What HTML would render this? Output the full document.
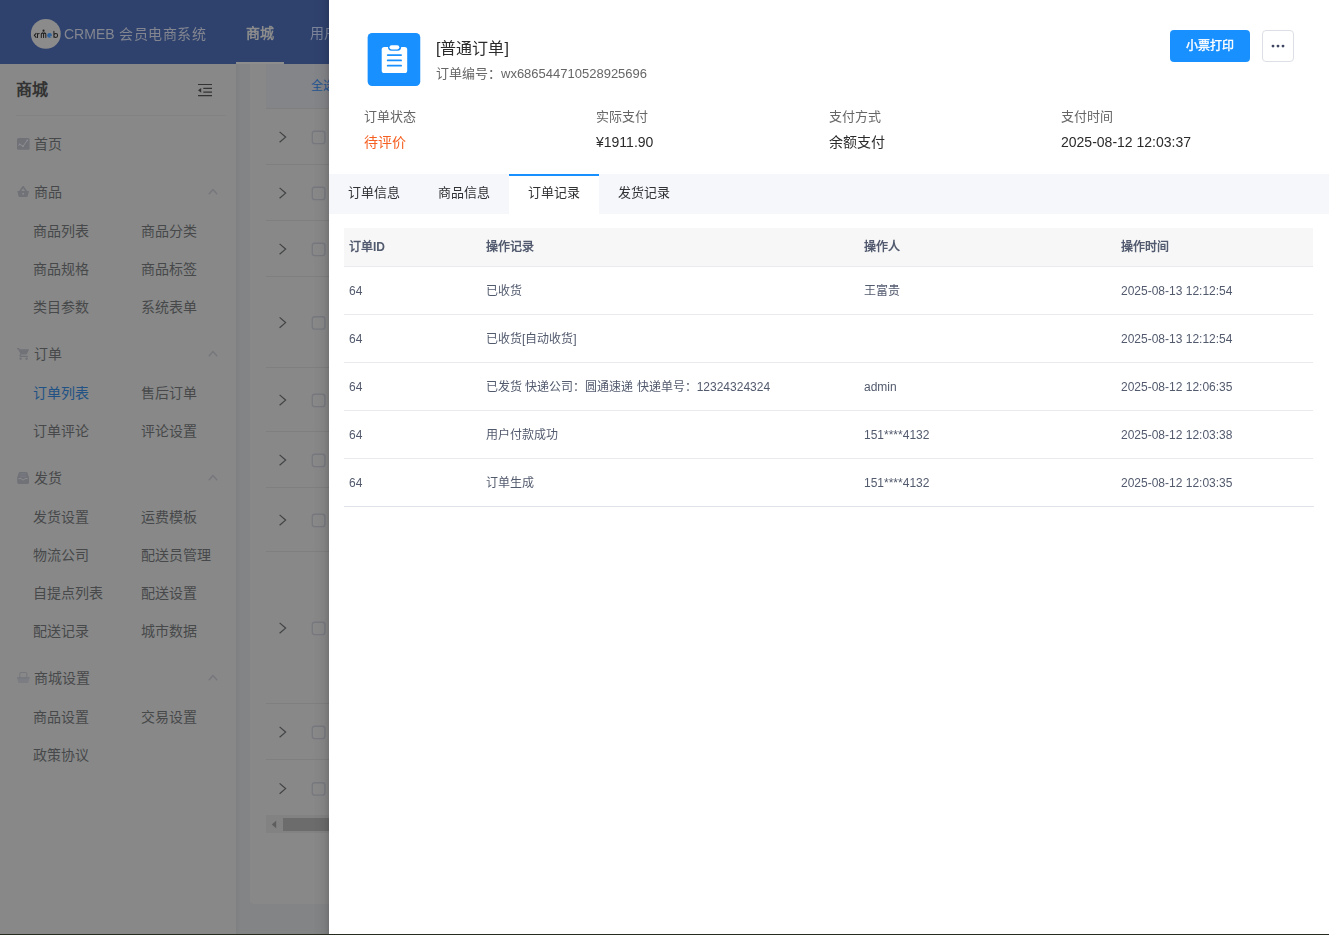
<!DOCTYPE html>
<html lang="zh-CN">
<head>
<meta charset="utf-8">
<title>CRMEB</title>
<style>
*{box-sizing:border-box;margin:0;padding:0}
html,body{width:1329px;height:935px;overflow:hidden}
body{font-family:"Liberation Sans",sans-serif;background:#838486;position:relative;color:#333}
.abs{position:absolute}
/* ---------- dimmed background app ---------- */
#hdr{left:0;top:0;width:1329px;height:64px;background:#2f426e;will-change:transform;transform:translateZ(0)}
#logo{left:31px;top:19px;width:30px;height:30px;border-radius:50%;background:#8e8e8e;overflow:hidden}
#brand{left:64px;top:24px;font-size:14px;line-height:20px;color:#838690;white-space:nowrap}
#brand span{letter-spacing:.5px;margin-left:.6px}
.nav{top:23px;font-size:14px;line-height:20px;color:#7d859b;white-space:nowrap}
#navline{left:236px;top:62px;width:48px;height:2px;background:#8d8d8d}
#side{left:0;top:64px;width:236px;height:871px;background:#888888}
#side .ttl{left:16px;top:15px;font-size:16px;line-height:22px;font-weight:bold;color:#333}
#side .hr{left:16px;top:51px;width:210px;height:1px;background:#828282}
.mi{font-size:14px;line-height:20px;color:#47484a;white-space:nowrap}
.mi.act{color:#215285}
#card{left:250px;top:64px;width:1079px;height:840px;background:#888888;border-radius:0 0 0 4px}
#thead{left:266px;top:64px;width:1063px;height:44px;background:#848589}
.rl{left:266px;width:1063px;height:1px;background:#7f7f80}
.cb{left:311px;width:14px;height:14px;border:1px solid #7b7c80;border-radius:2px;background:#8a8a8a}
.rc{left:278px;width:8px;height:12px}
#botline{left:0;top:934px;width:1329px;height:1px;background:#252d22;z-index:9}
/* ---------- drawer ---------- */
#shadow{left:313px;top:0;width:16px;height:935px;background:linear-gradient(to right,rgba(0,0,0,0) 0,rgba(0,0,0,.015) 35%,rgba(0,0,0,.045) 65%,rgba(0,0,0,.09) 85%,rgba(0,0,0,.15) 100%)}
#drawer{left:329px;top:0;width:1000px;height:935px;background:#fff;will-change:transform;transform:translateZ(0)}
#ibox{left:39px;top:33px;width:53px;height:53px;border-radius:4px;background:#1890ff}
#t1{left:107px;top:38px;font-size:16px;line-height:22px;color:#2b2b2b;white-space:nowrap}
#t2{left:107px;top:65px;font-size:13px;line-height:18px;color:#666;white-space:nowrap}
#btn1{left:841px;top:30px;width:80px;height:32px;border-radius:4px;background:#1890ff;color:#fff;font-size:12px;line-height:32px;text-align:center;-webkit-text-stroke:.4px #fff}
#btn2{left:933px;top:30px;width:32px;height:32px;border-radius:4px;border:1px solid #dcdfe6;background:#fff}
#btn2 i{position:absolute;top:13.7px;width:2.6px;height:2.6px;border-radius:50%;background:#4a5068}
.lab{top:108px;font-size:13px;line-height:18px;color:#666;white-space:nowrap}
.val{top:132px;font-size:14px;line-height:20px;color:#2b2b2b;white-space:nowrap}
#tabs{left:0;top:174px;width:1000px;height:40px;background:#f5f7fa}
.tab{top:0;width:90px;height:40px;font-size:13px;line-height:38px;text-align:center;color:#303133}
.tab.on{background:#fff;border-top:2px solid #1890ff;line-height:34px}
#tbl{left:15px;top:228px;width:969px}
#th{left:0;top:0;width:969px;height:38px;background:#f7f7f7}
.hc{top:10px;font-size:12px;line-height:18px;font-weight:bold;color:#515a6e;white-space:nowrap}
.row{left:0;width:969px;height:48px;border-top:1px solid #e8eaee}
#lastl{left:0;top:278px;width:970px;height:1px;background:#dfe2e8}
.c{top:15px;font-size:12px;line-height:18px;color:#525a6d;white-space:nowrap}
.c1{left:5px}.c2{left:142px}.c3{left:520px}.c4{left:777px}
</style>
</head>
<body>
<!-- background application (dimmed by modal mask) -->
<div id="hdr" class="abs">
  <svg class="abs" style="left:26px;top:14px;width:40px;height:40px" viewBox="26 14 40 40"><circle cx="45.8" cy="33.9" r="14.9" fill="#8b8b8b"/><g fill="none" stroke="#222" stroke-width="1.05" stroke-linecap="round" stroke-linejoin="round"><path d="M36.1 33.3 L34.3 35.4 L36.1 37.4"/><path d="M37.5 37.5 V33.5 M37.5 34.7 Q37.9 33.5 39.1 33.4"/><path d="M41.3 37.5 V34.1 Q41.3 33.1 42.4 33.1 Q43.55 33.1 43.55 34.1 V37.5 M43.55 34.1 Q43.55 33.1 44.7 33.1 Q45.8 33.1 45.8 34.1 V37.5"/><path d="M53.9 31.3 V37.3 M53.9 35.5 A1.85 1.95 0 1 1 57.6 35.5 A1.85 1.95 0 1 1 53.9 35.5"/></g><circle cx="43.55" cy="30.6" r="1.05" fill="#222"/><path d="M42.3 32.3 Q43.55 31.3 44.8 32.3" stroke="#222" stroke-width=".7" fill="none"/><circle cx="49.55" cy="35.4" r="2.35" fill="#2b619e"/><path d="M49.8 36.1 L52 36.6" stroke="#8b8b8b" stroke-width=".7"/></svg>
  <div id="brand" class="abs">CRMEB <span>会员电商系统</span></div>
  <div class="abs nav" style="left:246px;font-weight:bold;color:#8c8c8c">商城</div>
  <div class="abs nav" style="left:310px">用户</div>
  <div id="navline" class="abs"></div>
</div>
<div id="side" class="abs">
  <div class="abs ttl">商城</div>
  <div class="abs hr"></div>
  <svg class="abs" style="left:17px;top:74px;width:13px;height:12px" viewBox="0 0 13 12"><rect x="0" y="0" width="12.6" height="11.8" rx="1.6" fill="#707278"/><path d="M1.6 7.6 L2.6 6.2 L6 8.3 L10.4 2.2" stroke="#8c8d92" stroke-width="1" fill="none"/><circle cx="2.6" cy="6.3" r=".9" fill="#8c8d92"/><circle cx="6" cy="8.2" r=".9" fill="#8c8d92"/><circle cx="10.3" cy="2.3" r=".9" fill="#8c8d92"/></svg>
  <div class="abs mi" style="left:34px;top:70px">首页</div>
  <svg class="abs" style="left:17px;top:122px;width:13px;height:12px" viewBox="0 0 13 12"><path d="M0.3 5.1 H12 L10.7 10.2 Q10.5 11 9.6 11 H2.7 Q1.8 11 1.6 10.2 Z" fill="#707278"/><path d="M2.9 5.6 L6.15 0.8 L9.4 5.6" stroke="#707278" stroke-width="1.7" fill="none" stroke-linejoin="round"/><rect x="5.35" y="6.9" width="1.6" height="1.7" fill="#8a8b8e"/></svg>
  <div class="abs mi" style="left:34px;top:118px">商品</div>
  <svg class="abs" style="left:208px;top:124px;width:10px;height:7px" viewBox="0 0 10 7"><path d="M0.8 6.2 L5 1.6 L9.2 6.2" stroke="#75777c" stroke-width="1.35" fill="none"/></svg>
  <div class="abs mi" style="left:33px;top:157px">商品列表</div>
  <div class="abs mi" style="left:141px;top:157px">商品分类</div>
  <div class="abs mi" style="left:33px;top:195px">商品规格</div>
  <div class="abs mi" style="left:141px;top:195px">商品标签</div>
  <div class="abs mi" style="left:33px;top:233px">类目参数</div>
  <div class="abs mi" style="left:141px;top:233px">系统表单</div>
  <svg class="abs" style="left:17px;top:284px;width:12.6px;height:12px" viewBox="1 2 21 20"><path fill="#707278" d="M7 18c-1.1 0-1.99.9-1.99 2S5.9 22 7 22s2-.9 2-2-.9-2-2-2zM1 2v2h2l3.6 7.59-1.35 2.45c-.16.28-.25.61-.25.96 0 1.1.9 2 2 2h12v-2H7.42c-.14 0-.25-.11-.25-.25l.03-.12.9-1.63h7.45c.75 0 1.41-.41 1.75-1.03l3.58-6.49c.08-.14.12-.31.12-.47 0-.55-.45-1-1-1H5.21l-.94-2H1zm16 16c-1.1 0-1.99.9-1.99 2s.89 2 1.99 2 2-.9 2-2-.9-2-2-2z"/></svg>
  <div class="abs mi" style="left:34px;top:280px">订单</div>
  <svg class="abs" style="left:208px;top:286px;width:10px;height:7px" viewBox="0 0 10 7"><path d="M0.8 6.2 L5 1.6 L9.2 6.2" stroke="#75777c" stroke-width="1.35" fill="none"/></svg>
  <div class="abs mi act" style="left:33px;top:319px">订单列表</div>
  <div class="abs mi" style="left:141px;top:319px">售后订单</div>
  <div class="abs mi" style="left:33px;top:357px">订单评论</div>
  <div class="abs mi" style="left:141px;top:357px">评论设置</div>
  <svg class="abs" style="left:17px;top:408px;width:13px;height:12px" viewBox="0 0 13 12"><path d="M2.9 0 H9.3 Q10.1 0 10.4 .8 L12 5.5 V10.6 Q12 12 10.6 12 H1.6 Q0.2 12 0.2 10.6 V5.5 L1.8 .8 Q2.1 0 2.9 0 Z" fill="#707278"/><path d="M1.6 6.6 H4.4 Q4.6 7.9 6.1 7.9 Q7.6 7.9 7.8 6.6 H10.6" stroke="#8d8e92" stroke-width=".9" fill="none"/><path d="M3.3 1.9 H8.9 M2.8 4.2 H9.4" stroke="#818389" stroke-width=".7"/></svg>
  <div class="abs mi" style="left:34px;top:404px">发货</div>
  <svg class="abs" style="left:208px;top:410px;width:10px;height:7px" viewBox="0 0 10 7"><path d="M0.8 6.2 L5 1.6 L9.2 6.2" stroke="#75777c" stroke-width="1.35" fill="none"/></svg>
  <div class="abs mi" style="left:33px;top:443px">发货设置</div>
  <div class="abs mi" style="left:141px;top:443px">运费模板</div>
  <div class="abs mi" style="left:33px;top:481px">物流公司</div>
  <div class="abs mi" style="left:141px;top:481px">配送员管理</div>
  <div class="abs mi" style="left:33px;top:519px">自提点列表</div>
  <div class="abs mi" style="left:141px;top:519px">配送设置</div>
  <div class="abs mi" style="left:33px;top:557px">配送记录</div>
  <div class="abs mi" style="left:141px;top:557px">城市数据</div>
  <svg class="abs" style="left:17px;top:608px;width:13px;height:12px" viewBox="0 0 13 12"><path d="M2.8 5.4 V1.4 Q2.8 .5 3.7 .5 H8.9 Q9.8 .5 9.8 1.4 V5.4" stroke="#72747a" stroke-width=".8" fill="none"/><path d="M0.1 5.4 H12.6 L11.3 10.6 Q11.2 11.1 10.6 11.1 H2.1 Q1.5 11.1 1.4 10.6 Z" fill="#7b7d83"/><path d="M0.1 5.8 H12.6" stroke="#72747a" stroke-width=".9"/></svg>
  <div class="abs mi" style="left:34px;top:604px">商城设置</div>
  <svg class="abs" style="left:208px;top:610px;width:10px;height:7px" viewBox="0 0 10 7"><path d="M0.8 6.2 L5 1.6 L9.2 6.2" stroke="#75777c" stroke-width="1.35" fill="none"/></svg>
  <div class="abs mi" style="left:33px;top:643px">商品设置</div>
  <div class="abs mi" style="left:141px;top:643px">交易设置</div>
  <div class="abs mi" style="left:33px;top:681px">政策协议</div>
  <svg class="abs" style="left:197px;top:19px;width:16px;height:14px" viewBox="0 0 16 14"><path d="M1 1.5 H15 M6.3 5.4 H15 M6.3 9.1 H15 M1 12.6 H15" stroke="#333" stroke-width="1.1" fill="none"/><path d="M4.2 5 V9.7 L1 7.35 Z" fill="#333"/></svg>
</div>
<div class="abs" style="left:236px;top:64px;width:5px;height:871px;background:linear-gradient(to right,rgba(0,0,0,.035),rgba(0,0,0,0))"></div>
<div id="card" class="abs"></div>
<div id="thead" class="abs"></div>
<div class="abs" style="left:311px;top:77px;font-size:12px;line-height:18px;color:#1f5492;white-space:nowrap">全选</div>
<div class="abs rl" style="top:108px"></div>
<div class="abs rl" style="top:164px"></div>
<div class="abs rl" style="top:220px"></div>
<div class="abs rl" style="top:276px"></div>
<div class="abs rl" style="top:367px"></div>
<div class="abs rl" style="top:431px"></div>
<div class="abs rl" style="top:487px"></div>
<div class="abs rl" style="top:551px"></div>
<div class="abs rl" style="top:703px"></div>
<div class="abs rl" style="top:759px"></div>
<svg class="abs" style="left:266px;top:64px;width:63px;height:871px" viewBox="266 64 63 871"><path d="M279.6 131.90 L285.6 137.10 L279.6 142.30" stroke="#424345" stroke-width="1.25" fill="none"/><rect x="312.3" y="131.25" width="12.6" height="12.4" rx="2.4" fill="#898989" stroke="#77797f" stroke-width="1.4"/><path d="M279.6 187.90 L285.6 193.10 L279.6 198.30" stroke="#424345" stroke-width="1.25" fill="none"/><rect x="312.3" y="187.25" width="12.6" height="12.4" rx="2.4" fill="#898989" stroke="#77797f" stroke-width="1.4"/><path d="M279.6 243.90 L285.6 249.10 L279.6 254.30" stroke="#424345" stroke-width="1.25" fill="none"/><rect x="312.3" y="243.25" width="12.6" height="12.4" rx="2.4" fill="#898989" stroke="#77797f" stroke-width="1.4"/><path d="M279.6 317.40 L285.6 322.60 L279.6 327.80" stroke="#424345" stroke-width="1.25" fill="none"/><rect x="312.3" y="316.75" width="12.6" height="12.4" rx="2.4" fill="#898989" stroke="#77797f" stroke-width="1.4"/><path d="M279.6 394.90 L285.6 400.10 L279.6 405.30" stroke="#424345" stroke-width="1.25" fill="none"/><rect x="312.3" y="394.25" width="12.6" height="12.4" rx="2.4" fill="#898989" stroke="#77797f" stroke-width="1.4"/><path d="M279.6 454.90 L285.6 460.10 L279.6 465.30" stroke="#424345" stroke-width="1.25" fill="none"/><rect x="312.3" y="454.25" width="12.6" height="12.4" rx="2.4" fill="#898989" stroke="#77797f" stroke-width="1.4"/><path d="M279.6 514.90 L285.6 520.10 L279.6 525.30" stroke="#424345" stroke-width="1.25" fill="none"/><rect x="312.3" y="514.25" width="12.6" height="12.4" rx="2.4" fill="#898989" stroke="#77797f" stroke-width="1.4"/><path d="M279.6 622.90 L285.6 628.10 L279.6 633.30" stroke="#424345" stroke-width="1.25" fill="none"/><rect x="312.3" y="622.25" width="12.6" height="12.4" rx="2.4" fill="#898989" stroke="#77797f" stroke-width="1.4"/><path d="M279.6 726.90 L285.6 732.10 L279.6 737.30" stroke="#424345" stroke-width="1.25" fill="none"/><rect x="312.3" y="726.25" width="12.6" height="12.4" rx="2.4" fill="#898989" stroke="#77797f" stroke-width="1.4"/><path d="M279.6 783.40 L285.6 788.60 L279.6 793.80" stroke="#424345" stroke-width="1.25" fill="none"/><rect x="312.3" y="782.75" width="12.6" height="12.4" rx="2.4" fill="#898989" stroke="#77797f" stroke-width="1.4"/></svg>
<div class="abs" style="left:266px;top:815px;width:1063px;height:18px;background:#828282"></div>
<div class="abs" style="left:283px;top:818px;width:1046px;height:13px;background:#6c6c6c"></div>
<svg class="abs" style="left:271px;top:820px;width:6px;height:9px" viewBox="0 0 6 9"><path d="M5.2 0.8 V8.2 L0.8 4.5 Z" fill="#5e5e5e"/></svg>
<div id="shadow" class="abs"></div>

<!-- drawer -->
<div id="drawer" class="abs">
  <svg class="abs" style="left:36px;top:30px;width:60px;height:60px" viewBox="0 0 60 60"><rect x="2.64" y="2.9" width="52.62" height="53.1" rx="4.5" fill="#1890ff"/><rect x="16.7" y="17" width="25.5" height="26" rx="2.6" fill="#fff"/><rect x="23" y="13.9" width="13.1" height="6.8" rx="3.4" fill="#1890ff"/><rect x="24.5" y="15.3" width="9.8" height="4.1" rx="2.05" fill="#fff"/><path d="M22.7 25.1 H36.1 M22.7 30.4 H36.1 M22.7 35.7 H36.1" stroke="#1890ff" stroke-width="1.8" stroke-linecap="round"/></svg>
  <div id="t1" class="abs">[普通订单]</div>
  <div id="t2" class="abs">订单编号：wx686544710528925696</div>
  <div id="btn1" class="abs">小票打印</div>
  <div id="btn2" class="abs"><svg class="abs" style="left:0;top:0;width:30px;height:30px" viewBox="0 0 30 30"><circle cx="10" cy="15.1" r="1.45" fill="#3f4560"/><circle cx="15" cy="15.1" r="1.45" fill="#3f4560"/><circle cx="20" cy="15.1" r="1.45" fill="#3f4560"/></svg></div>

  <div class="abs lab" style="left:35px">订单状态</div>
  <div class="abs lab" style="left:267px">实际支付</div>
  <div class="abs lab" style="left:500px">支付方式</div>
  <div class="abs lab" style="left:732px">支付时间</div>
  <div class="abs val" style="left:35px;color:#f56022">待评价</div>
  <div class="abs val" style="left:267px">¥1911.90</div>
  <div class="abs val" style="left:500px">余额支付</div>
  <div class="abs val" style="left:732px">2025-08-12 12:03:37</div>

  <div id="tabs" class="abs">
    <div class="abs tab" style="left:0">订单信息</div>
    <div class="abs tab" style="left:90px">商品信息</div>
    <div class="abs tab on" style="left:180px">订单记录</div>
    <div class="abs tab" style="left:270px">发货记录</div>
  </div>

  <div id="tbl" class="abs">
    <div id="th" class="abs">
      <div class="abs hc c1">订单ID</div>
      <div class="abs hc c2">操作记录</div>
      <div class="abs hc c3">操作人</div>
      <div class="abs hc c4">操作时间</div>
    </div>
    <div class="abs row" style="top:38px"><span class="abs c c1">64</span><span class="abs c c2">已收货</span><span class="abs c c3">王富贵</span><span class="abs c c4">2025-08-13 12:12:54</span></div>
    <div class="abs row" style="top:86px"><span class="abs c c1">64</span><span class="abs c c2">已收货[自动收货]</span><span class="abs c c3"></span><span class="abs c c4">2025-08-13 12:12:54</span></div>
    <div class="abs row" style="top:134px"><span class="abs c c1">64</span><span class="abs c c2">已发货 快递公司：圆通速递 快递单号：12324324324</span><span class="abs c c3">admin</span><span class="abs c c4">2025-08-12 12:06:35</span></div>
    <div class="abs row" style="top:182px"><span class="abs c c1">64</span><span class="abs c c2">用户付款成功</span><span class="abs c c3">151****4132</span><span class="abs c c4">2025-08-12 12:03:38</span></div>
    <div class="abs row" style="top:230px"><span class="abs c c1">64</span><span class="abs c c2">订单生成</span><span class="abs c c3">151****4132</span><span class="abs c c4">2025-08-12 12:03:35</span></div>
    <div id="lastl" class="abs"></div>
  </div>
</div>
<div id="botline" class="abs"></div>
</body>
</html>
